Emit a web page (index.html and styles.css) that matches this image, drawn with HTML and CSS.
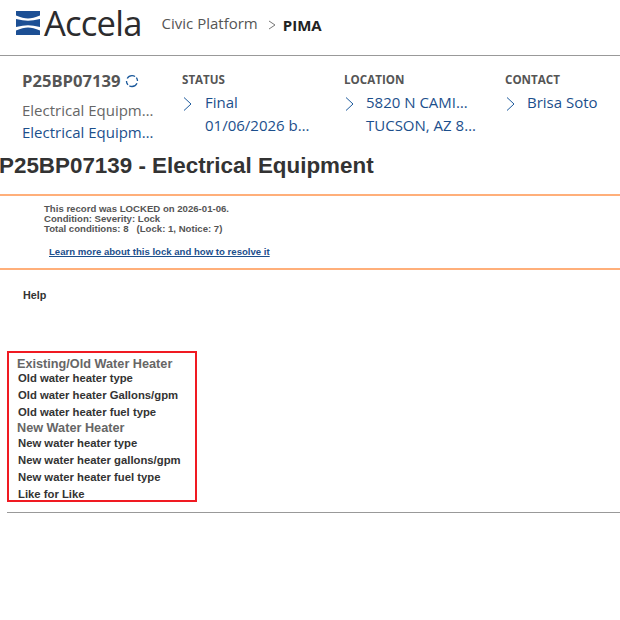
FILE: index.html
```html
<!DOCTYPE html>
<html lang="en">
<head>
    <meta charset="UTF-8">
    <title>Accela Civic Platform</title>
    <link rel="stylesheet" href="styles.css">
</head>
<body>
    <header class="topbar">
        <svg class="logo-mark" viewBox="0 0 24 24" width="24" height="24">
            <rect width="24" height="24" fill="#1c4f94"/>
            <path d="M0 4.5 Q7 7.5 12 7.5 Q17 7.5 24 4.5 L24 8 Q17 9.8 12 9.8 Q7 9.8 0 8Z" fill="#fff"/>
            <path d="M0 16 Q7 14.2 12 14.2 Q17 14.2 24 16 L24 19.5 Q17 16.5 12 16.5 Q7 16.5 0 19.5Z" fill="#fff"/>
        </svg>
        <span class="logo-text">Accela</span>
        <span class="crumb">Civic Platform</span>
        <svg class="crumb-sep" viewBox="0 0 8 10" width="8" height="10"><path d="M1 1l6 4-6 4" fill="none" stroke="#777" stroke-width="1"/></svg>
        <span class="agency">PIMA</span>
    </header>

    <section class="summary">
        <div class="record">
            <div class="record-id">P25BP07139
                <svg viewBox="0 0 14 14" width="14" height="14"><path d="M2.2 4.5A5.5 5.5 0 0 1 12 4.8M12 9.2A5.5 5.5 0 0 1 2 9.4M1.5 7A5.5 5.5 0 0 0 2 9.4M12.5 7a5.5 5.5 0 0 0-.5-2.2" fill="none" stroke="#1c5a9c" stroke-width="1.3" stroke-dasharray="9 1.6"/></svg>
            </div>
            <div class="cut grey">Electrical Equipm…</div>
            <div class="cut blue">Electrical Equipm…</div>
        </div>
        <div class="col col-status">
            <div class="label">STATUS</div>
            <div class="item">
                <svg class="chev" viewBox="0 0 9 14" width="9" height="14"><path d="M1 .5l7 6.5-7 6.5" fill="none" stroke="#1c5a9c" stroke-width="1"/></svg>
                <div class="lines"><div class="cut blue">Final</div><div class="cut blue">01/06/2026 b…</div></div>
            </div>
        </div>
        <div class="col col-location">
            <div class="label">LOCATION</div>
            <div class="item">
                <svg class="chev" viewBox="0 0 9 14" width="9" height="14"><path d="M1 .5l7 6.5-7 6.5" fill="none" stroke="#1c5a9c" stroke-width="1"/></svg>
                <div class="lines"><div class="cut blue">5820 N CAMI…</div><div class="cut blue">TUCSON, AZ 8…</div></div>
            </div>
        </div>
        <div class="col col-contact">
            <div class="label">CONTACT</div>
            <div class="item">
                <svg class="chev" viewBox="0 0 9 14" width="9" height="14"><path d="M1 .5l7 6.5-7 6.5" fill="none" stroke="#1c5a9c" stroke-width="1"/></svg>
                <div class="lines"><div class="blue">Brisa Soto</div></div>
            </div>
        </div>
    </section>

    <h1 class="title">P25BP07139 - Electrical Equipment</h1>

    <section class="notice">
        <p>This record was LOCKED on 2026-01-06.<br>Condition: Severity: Lock<br>Total conditions: 8 &nbsp; (Lock: 1, Notice: 7)</p>
        <a class="notice-link" href="#">Learn more about this lock and how to resolve it</a>
    </section>

    <div class="help">Help</div>

    <section class="fields">
        <h2>Existing/Old Water Heater</h2>
        <div class="field">Old water heater type</div>
        <div class="field">Old water heater Gallons/gpm</div>
        <div class="field">Old water heater fuel type</div>
        <h2>New Water Heater</h2>
        <div class="field">New water heater type</div>
        <div class="field">New water heater gallons/gpm</div>
        <div class="field">New water heater fuel type</div>
        <div class="field">Like for Like</div>
    </section>

    <hr class="rule">
</body>
</html>
```
FILE: styles.css
```css
body {
    margin: 0;
    font-family: "Liberation Sans", Arial, sans-serif;
    background: #fff;
    color: #333;
    overflow: hidden;
}
.topbar {
    height: 49px;
    padding-bottom: 6px;
    border-bottom: 1px solid #999;
    display: flex;
    align-items: center;
    padding-left: 16px;
    font-family: "Open Sans", sans-serif;
}
.logo-mark {
    margin-top: -3px;
}
.logo-text {
    font-size: 34.6px;
    color: #2c2c2e;
    margin-left: 4px;
    letter-spacing: -0.8px;
    margin-top: -4px;
}
.crumb {
    font-size: 15px;
    color: #555;
    margin-left: 20px;
    margin-top: -3px;
}
.crumb-sep {
    margin-left: 10px;
}
.agency {
    font-size: 15px;
    font-weight: 700;
    color: #222;
    margin-left: 7px;
}
.summary {
    display: flex;
    height: 94px;
    font-family: "Open Sans", sans-serif;
    font-size: 15px;
    line-height: 22px;
}
.record {
    width: 135px;
    margin-left: 22px;
    margin-right: 25px;
    padding-top: 10px;
}
.record-id {
    font-size: 16.6px;
    font-weight: 700;
    color: #555;
    line-height: 30px;
    margin-bottom: 3px;
    white-space: nowrap;
}
.record-id svg {
    vertical-align: -1px;
}
.cut {
    white-space: nowrap;
}
.grey {
    color: #666;
}
.blue {
    color: #1c4f8c;
}
.col {
    padding-top: 15px;
    width: 162px;
}
.col-location {
    width: 161px;
}
.col-contact {
    width: 115px;
}
.label {
    font-size: 11.6px;
    font-weight: 700;
    color: #555;
    line-height: 17px;
}
.item {
    display: flex;
    margin: 3px 0 0 1px;
}
.chev {
    margin-top: 6px;
    flex: none;
}
.lines {
    margin-left: 13px;
    line-height: 23px;
    white-space: nowrap;
}
.col-location .lines, .col-contact .lines {
    margin-left: 12px;
}
.title {
    font-size: 22.4px;
    line-height: 28px;
    margin: 2px 0 14px -1px;
    color: #333;
}
.notice {
    border-top: 2px solid #ffaf7a;
    border-bottom: 2px solid #ffaf7a;
    height: 72px;
    padding-left: 44px;
    font-size: 9.6px;
    color: #555;
    font-weight: 700;
}
.notice p {
    margin: 8px 0 0;
    line-height: 10px;
}
.notice-link {
    display: inline-block;
    margin: 12px 0 0 5px;
    color: #1c4f8c;
    line-height: 11px;
}
.help {
    font-size: 10.8px;
    font-weight: 700;
    margin: 19px 0 0 23px;
    line-height: 12px;
}
.fields {
    border: 2px solid #f01a22;
    width: 178px;
    height: 142px;
    margin: 50px 0 0 7px;
    padding: 5px 0 0 8px;
}
.fields h2 {
    font-size: 12.7px;
    line-height: 12px;
    margin: 0;
    color: #666;
}
.fields .field + h2 {
    line-height: 13px;
    margin-top: 2px;
}
.field {
    font-size: 11.3px;
    font-weight: 700;
    line-height: 16.8px;
    margin-left: 1px;
}
.rule {
    border: 0;
    border-top: 1px solid #999;
    margin: 10px 0 0 7px;
}
```
